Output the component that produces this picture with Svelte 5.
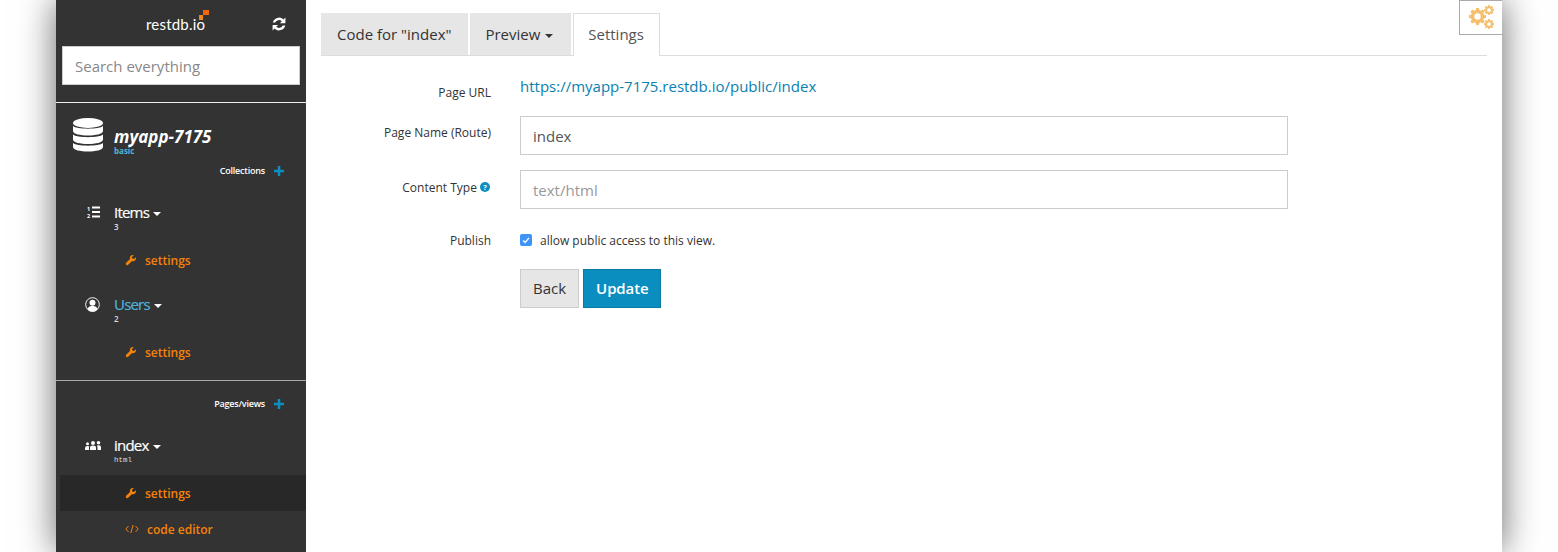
<script>
	const wrench = 'M21.7 6.300l-3.900 3.900-3-1-1-3 3.900-3.900a6 6 0 0 0-7.700 7.600L2.300 17.600a2.900 2.900 0 0 0 4.100 4.100l7.700-7.700a6 6 0 0 0 7.600-7.700z';
	const plus = 'M4.500 0h3v4.500H12v3H7.500V12h-3V7.500H0v-3h4.500z';
	const caret = 'M0 0h8L4 4z';
	const gear = 'M10 0h4l.6 3.100 2 .8 2.600-1.800 2.800 2.800-1.800 2.600.8 2 3 .5v4l-3 .6-.8 2 1.800 2.600-2.800 2.800-2.600-1.800-2 .8-.6 3.100h-4l-.6-3.100-2-.8-2.600 1.800-2.800-2.800 1.800-2.600-.8-2L0 14v-4l3-.5.8-2L2 4.900l2.800-2.800 2.600 1.800 2-.8zM12 7.500a4.500 4.500 0 1 0 0 9 4.500 4.500 0 0 0 0-9z';
</script>

<div class="window">
	<aside class="sidebar">
		<div class="brand">
			<span class="logo">restdb.io<i class="dot big"></i><i class="dot small"></i></span>
			<svg class="refresh" viewBox="0 0 24 24" width="14" height="14">
				<path d="M23 1v9.500h-9.500l3.300-3.300A7 7 0 0 0 5.500 9.500H1.300A11 11 0 0 1 19.700 4.300z" fill="#fff" />
				<path d="M1 23v-9.500h9.500l-3.300 3.300a7 7 0 0 0 11.300-2.300h4.200A11 11 0 0 1 4.300 19.700z" fill="#fff" />
			</svg>
		</div>
		<div class="search">Search everything</div>
		<hr class="rule light" />

		<div class="db">
			<svg viewBox="0 0 30 34" width="30" height="34">
				<g fill="#fff">
					<ellipse cx="15" cy="5" rx="15" ry="5" />
					<path d="M0 8c3 3.500 27 3.500 30 0v5c0 6-30 6-30 0z" />
					<path d="M0 16.500c3 3.500 27 3.500 30 0v5c0 6-30 6-30 0z" />
					<path d="M0 25c3 3.500 27 3.500 30 0v4c0 6-30 6-30 0z" />
				</g>
			</svg>
			<div class="db-text">
				<div class="db-name">myapp-7175</div>
				<div class="db-plan">basic</div>
			</div>
		</div>

		<div class="section first">Collections <svg viewBox="0 0 12 12" width="10" height="10"><path d={plus} fill="#0a8fc0" /></svg></div>

		<div class="entry items">
			<svg class="entry-icon" viewBox="0 0 14 15" width="14" height="15">
				<g fill="#fff">
					<rect x="6" y="0.500" width="8" height="2" />
					<rect x="6" y="5" width="8" height="2" />
					<rect x="6" y="9.500" width="8" height="2" />
					<text x="2.500" y="4.500" text-anchor="middle" font-size="5.500" font-weight="700">1</text>
					<text x="2.500" y="11.500" text-anchor="middle" font-size="5.500" font-weight="700">2</text>
				</g>
			</svg>
			<div>
				<div class="entry-name">Items <svg viewBox="0 0 8 4" width="8" height="4"><path d={caret} fill="#fff" /></svg></div>
				<div class="entry-sub">3</div>
			</div>
		</div>
		<div class="link"><svg viewBox="0 0 24 24" width="12" height="12"><path d={wrench} fill="#f5820a" /></svg>settings</div>

		<div class="entry users">
			<svg class="entry-icon wide" viewBox="0 0 16 16" width="15" height="15">
				<circle cx="8" cy="8" r="7.300" fill="none" stroke="#fff" stroke-width="1" />
				<circle cx="8" cy="6" r="3.200" fill="#fff" />
				<path d="M2.500 13c1-3 3.500-3.500 5.500-3.500s4.500.5 5.500 3.500a7 7 0 0 1-11 0z" fill="#fff" />
			</svg>
			<div>
				<div class="entry-name blue">Users <svg viewBox="0 0 8 4" width="8" height="4"><path d={caret} fill="#fff" /></svg></div>
				<div class="entry-sub">2</div>
			</div>
		</div>
		<div class="link"><svg viewBox="0 0 24 24" width="12" height="12"><path d={wrench} fill="#f5820a" /></svg>settings</div>

		<hr class="rule grey" />

		<div class="section">Pages/views <svg viewBox="0 0 12 12" width="10" height="10"><path d={plus} fill="#0a8fc0" /></svg></div>

		<div class="entry pages">
			<svg class="entry-icon wide" viewBox="0 0 16 9" width="16" height="9">
				<g fill="#fff">
					<circle cx="8" cy="2" r="2" />
					<path d="M5 9V6.500q0-2 3-2t3 2V9z" />
					<circle cx="13.500" cy="1.800" r="1.800" />
					<path d="M12 4.500q4-1 4 1.500v3h-3.500V6.500z" />
					<circle cx="2.500" cy="2.800" r="1.500" />
					<path d="M0 9V7q0-2 2.500-2T4 5.500V9z" />
				</g>
			</svg>
			<div>
				<div class="entry-name">index <svg viewBox="0 0 8 4" width="8" height="4"><path d={caret} fill="#fff" /></svg></div>
				<div class="entry-sub mono">html</div>
			</div>
		</div>
		<div class="link active"><svg viewBox="0 0 24 24" width="12" height="12"><path d={wrench} fill="#f5820a" /></svg>settings</div>
		<div class="link code">
			<svg viewBox="0 0 14 10" width="14" height="10" fill="none" stroke="#f5820a" stroke-width="1">
				<path d="M3.500 2L.8 5l2.700 3M10.500 2l2.700 3-2.700 3M8.200 1L5.800 9" />
			</svg>code editor
		</div>
	</aside>

	<main class="content">
		<div class="tabs">
			<div class="tab first-tab">Code for "index"</div>
			<div class="tab preview-tab">Preview <svg viewBox="0 0 8 4" width="8" height="4"><path d={caret} fill="#333" /></svg></div>
			<div class="tab current">Settings</div>
		</div>

		<form class="form">
			<div class="label url-label">Page URL</div>
			<a class="url" href="#top">https://myapp-7175.restdb.io/public/index</a>

			<div class="label name-label">Page Name (Route)</div>
			<div class="input">index</div>

			<div class="label type-label">
				Content Type
				<svg viewBox="0 0 16 16" width="10" height="10">
					<circle cx="8" cy="8" r="8" fill="#0a8fc0" />
					<text x="8" y="12.500" text-anchor="middle" font-size="12" font-weight="700" fill="#fff">?</text>
				</svg>
			</div>
			<div class="input placeholder">text/html</div>

			<div class="label publish-label">Publish</div>
			<div class="check">
				<span class="box">
					<svg viewBox="0 0 12 12" width="10" height="10"><path d="M2.500 6.500l2.500 2.500 4.500-5.500" fill="none" stroke="#fff" stroke-width="1.600" /></svg>
				</span>
				allow public access to this view.
			</div>

			<div></div>
			<div class="buttons">
				<button type="button" class="btn back">Back</button>
				<button type="button" class="btn update">Update</button>
			</div>
		</form>

		<div class="gears">
			<svg viewBox="0 0 26 24" width="26" height="24">
				<g fill="#f4bf6f" fill-rule="evenodd">
					<path d={gear} transform="translate(0 3) scale(.71)" />
					<path d={gear} transform="translate(15 0) scale(.42)" />
					<path d={gear} transform="translate(15 14) scale(.42)" />
				</g>
			</svg>
		</div>
	</main>
</div>

<style>
	:global(body) {
		background: #fff;
		overflow: hidden;
	}

	.window {
		display: flex;
		width: 1446px;
		height: 552px;
		margin-left: 56px;
		background: #fff;
		box-shadow: 0 0 34px rgba(0, 0, 0, 0.6);
		font-family: "Open Sans", sans-serif;
		overflow: hidden;
	}

	.sidebar {
		flex: 0 0 250px;
		background: #333;
		color: #fff;
	}

	.brand {
		position: relative;
		height: 46px;
		display: flex;
		justify-content: flex-end;
		align-items: center;
		box-sizing: border-box;
		padding: 1px 20px 0 0;
	}

	.logo {
		position: absolute;
		left: 90px;
		top: 15px;
		font-family: Lato, sans-serif;
		font-size: 15px;
		line-height: 18px;
		letter-spacing: 0.2px;
	}

	.dot {
		position: absolute;
		background: #f4650c;
	}

	.dot.big {
		left: 57px;
		top: -5px;
		width: 6px;
		height: 5px;
	}

	.dot.small {
		left: 53px;
		top: 0;
		width: 4px;
		height: 5px;
		background: #f08a1d;
	}

	.search {
		margin: 0 6px;
		height: 39px;
		box-sizing: border-box;
		border: 1px solid #ccc;
		background: #fff;
		color: #888;
		font-size: 15px;
		line-height: 39px;
		padding-left: 12px;
	}

	.rule {
		border: 0;
		height: 1px;
		margin: 0;
	}

	.rule.light {
		background: #eee;
		margin-top: 17px;
	}

	.rule.grey {
		background: #aaa;
		margin-top: 10px;
	}

	.db {
		display: flex;
		align-items: flex-start;
		padding: 15px 0 0 17px;
		height: 44px;
	}

	.db-text {
		margin: 9px 0 0 11px;
	}

	.db-name {
		font-size: 17px;
		line-height: 20px;
		font-weight: 700;
		font-style: italic;
	}

	.db-plan {
		font-size: 8px;
		line-height: 8px;
		font-weight: 700;
		color: #4db6dd;
	}

	.section {
		display: flex;
		justify-content: flex-end;
		align-items: center;
		gap: 9px;
		padding-right: 22px;
		font-size: 9px;
		line-height: 14px;
		font-weight: 600;
		letter-spacing: -0.2px;
	}

	.section.first {
		margin-top: 2px;
	}

	.section:not(.first) {
		margin-top: 16px;
	}

	.entry {
		display: flex;
		align-items: flex-start;
		padding-left: 30px;
		height: 39px;
	}

	.entry.items {
		margin-top: 24px;
	}

	.entry.users {
		margin-top: 16px;
	}

	.entry.pages {
		margin-top: 24px;
	}

	.entry-icon {
		flex: 0 0 auto;
		margin-top: 4px;
		margin-right: 14px;
	}

	.entry-icon.wide {
		margin-left: -1px;
	}

	.entry.users .entry-icon {
		margin-top: 3px;
		margin-right: 14px;
	}

	.entry.pages .entry-icon {
		margin-top: 6px;
		margin-right: 13px;
	}

	.entry-name {
		font-size: 15px;
		line-height: 20px;
		letter-spacing: -0.8px;
		-webkit-text-stroke: 0.2px currentColor;
	}

	.entry-name svg {
		vertical-align: 2px;
		margin-left: 1px;
	}

	.entry-name.blue {
		color: #4db6dd;
	}

	.entry-sub {
		font-size: 8px;
		line-height: 8px;
		font-weight: 600;
		color: #ddd;
		margin-top: 1px;
	}

	.entry-sub.mono {
		font-family: "Liberation Mono", monospace;
		font-size: 7.500px;
		font-weight: 400;
	}

	.link {
		display: flex;
		align-items: center;
		gap: 8px;
		height: 36px;
		margin-top: 1px;
		padding-left: 69px;
		font-size: 12px;
		font-weight: 600;
		color: #f5820a;
	}

	.link.active {
		background: #282828;
		margin-left: 4px;
		padding-left: 65px;
	}

	.link.code {
		margin-top: 0;
		padding-left: 69px;
	}

	.content {
		position: relative;
		flex: 1;
		padding: 13px 15px 0;
		color: #333;
	}

	.tabs {
		display: flex;
		gap: 2px;
		height: 43px;
		box-sizing: border-box;
		border-bottom: 1px solid #ddd;
	}

	.tab {
		height: 42px;
		box-sizing: border-box;
		padding: 0 16px;
		background: #e6e6e6;
		font-size: 15px;
		line-height: 42px;
		color: #333;
		white-space: nowrap;
	}

	.tab.first-tab {
		padding-right: 17px;
	}

	.tab.preview-tab {
		padding: 0 18px 0 15px;
	}

	.tab svg {
		vertical-align: 2px;
		margin-left: 1px;
	}

	.tab.current {
		height: 43px;
		padding: 0 15px 0 14px;
		background: #fff;
		border: 1px solid #ddd;
		border-bottom: 0;
		line-height: 41px;
		color: #555;
	}

	.form {
		display: grid;
		grid-template-columns: 170px 768px;
		column-gap: 29px;
		align-items: start;
	}

	.label {
		text-align: right;
		font-size: 12px;
		line-height: 17px;
		color: #333;
	}

	.url-label {
		margin-top: 28px;
		margin-bottom: 15px;
	}

	.url {
		margin-top: 20px;
		font-size: 15px;
		line-height: 20px;
		color: #0a7fb0;
		text-decoration: none;
	}

	.name-label {
		margin-top: 8px;
	}

	.type-label {
		margin-top: 9px;
		margin-right: 1px;
	}

	.publish-label {
		margin-top: 8px;
	}

	.input {
		height: 39px;
		box-sizing: border-box;
		border: 1px solid #ccc;
		padding-left: 12px;
		font-size: 15px;
		line-height: 38px;
		color: #555;
		margin-bottom: 15px;
	}

	.input.placeholder {
		color: #999;
	}

	.check {
		display: flex;
		align-items: center;
		gap: 8px;
		height: 20px;
		margin-top: 6px;
		font-size: 12px;
		color: #333;
	}

	.box {
		width: 12px;
		height: 12px;
		border-radius: 2px;
		background: #3d94f6;
		display: flex;
		align-items: center;
		justify-content: center;
	}

	.buttons {
		display: flex;
		gap: 4px;
		margin-top: 19px;
	}

	.btn {
		height: 39px;
		box-sizing: border-box;
		font-family: inherit;
		font-size: 15px;
		padding: 0 12px 2px;
		border: 1px solid #ccc;
		background: #e6e6e6;
		color: #333;
	}

	.btn.update {
		background: #0a8ebf;
		border-color: #087ba6;
		color: #fff;
		font-weight: 600;
		letter-spacing: -0.1px;
		padding-right: 11px;
	}

	.gears {
		position: absolute;
		top: 0;
		right: 0;
		width: 43px;
		height: 35px;
		box-sizing: border-box;
		border: 1px solid #aaa;
		border-right: 0;
		padding: 4px 0 0 9px;
		background: #fff;
	}
</style>
